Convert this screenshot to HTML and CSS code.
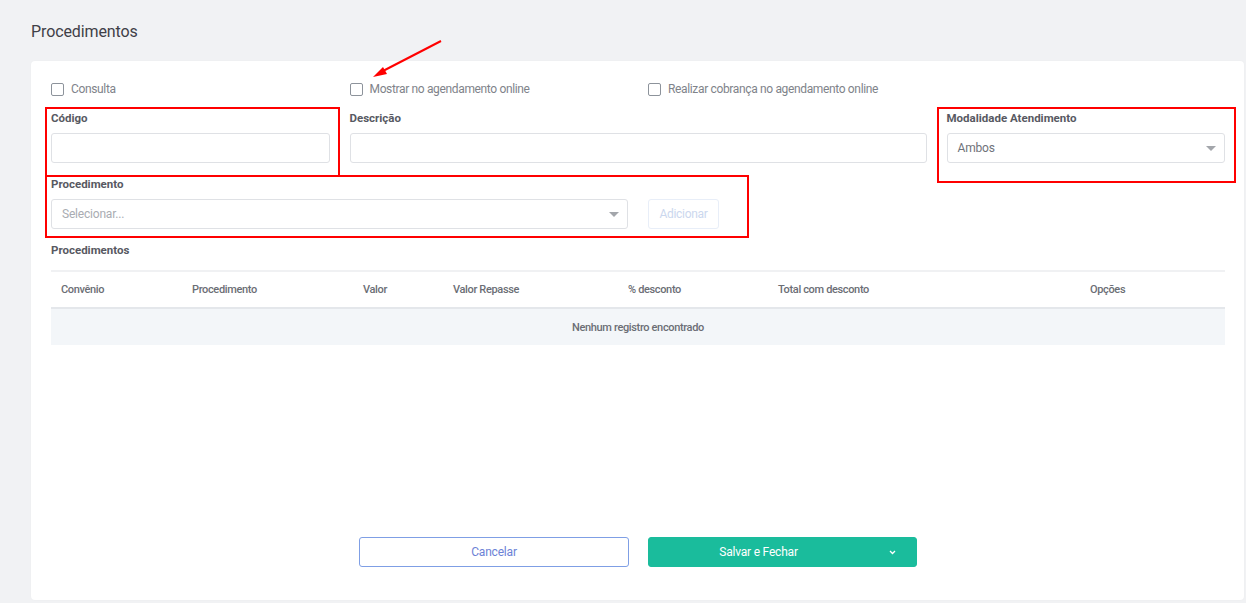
FILE: index.html
```html
<!DOCTYPE html>
<html lang="pt-BR">
<head>
<meta charset="utf-8">
<title>Procedimentos</title>
<link rel="stylesheet" href="styles.css">
</head>
<body>
<div class="page">
  <h1 class="page-title">Procedimentos</h1>
  <div class="card">
    <div class="grid checks">
      <label class="check"><span class="box"></span>Consulta</label>
      <label class="check"><span class="box"></span>Mostrar no agendamento online</label>
      <label class="check"><span class="box"></span>Realizar cobrança no agendamento online</label>
    </div>
    <div class="grid fields">
      <div class="field">
        <div class="label">Código</div>
        <div class="input"></div>
      </div>
      <div class="field span2">
        <div class="label">Descrição</div>
        <div class="input"></div>
      </div>
      <div class="field">
        <div class="label">Modalidade Atendimento</div>
        <div class="input select"><span class="value">Ambos</span><span class="caret"></span></div>
      </div>
    </div>
    <div class="grid fields proc">
      <div class="field span2">
        <div class="label">Procedimento</div>
        <div class="input select"><span class="placeholder">Selecionar...</span><span class="caret"></span></div>
      </div>
      <div class="field add-field">
        <button class="btn-add" disabled>Adicionar</button>
      </div>
    </div>
    <div class="label section-label">Procedimentos</div>
    <table class="table">
      <colgroup>
        <col style="width:131px"><col style="width:171px"><col style="width:90px"><col style="width:175px"><col style="width:150px"><col style="width:312px"><col style="width:145px">
      </colgroup>
      <thead>
        <tr><th>Convênio</th><th>Procedimento</th><th>Valor</th><th>Valor Repasse</th><th>% desconto</th><th>Total com desconto</th><th>Opções</th></tr>
      </thead>
      <tbody>
        <tr class="empty"><td colspan="7">Nenhum registro encontrado</td></tr>
      </tbody>
    </table>
    <div class="actions">
      <button class="btn btn-cancel">Cancelar</button>
      <button class="btn btn-save"><span class="save-main">Salvar e Fechar</span><span class="save-toggle"><svg width="7" height="5" viewBox="0 0 7 5"><path d="M1 1l2.5 2.5L6 1" fill="none" stroke="#fff" stroke-width="1.3"/></svg></span></button>
    </div>
  </div>
</div>
<div class="annotations">
  <div class="mark mark-codigo"></div>
  <div class="mark mark-modal"></div>
  <div class="mark mark-proc"></div>
  <svg class="arrow" width="1246" height="603" viewBox="0 0 1246 603">
    <line x1="441" y1="41" x2="381" y2="72" stroke="#f00" stroke-width="2"/>
    <polygon points="373,77 383,67 387,74" fill="#f00"/>
  </svg>
</div>
</body>
</html>
```

FILE: styles.css
```css
html, body {
  margin: 0;
  padding: 0;
}
body {
  background: #f1f2f4;
  font-family: Roboto, "Liberation Sans", Arial, sans-serif;
  color: #575962;
  width: 1246px;
  height: 603px;
  overflow: hidden;
  position: relative;
}
.page {
  padding: 22px 2px 0 31px;
}
.page-title {
  margin: 0;
  font-size: 16px;
  line-height: 19px;
  font-weight: 400;
  color: #3f4047;
  letter-spacing: -0.1px;
}
.card {
  margin-top: 20px;
  width: 1213px;
  height: 539px;
  box-sizing: border-box;
  background: #fff;
  border-radius: 4px;
  box-shadow: 0 0 2px rgba(0,0,0,0.04);
  padding: 19px 19px 33px 20px;
  display: flex;
  flex-direction: column;
}
.grid {
  display: grid;
  grid-template-columns: repeat(4, 278.5px);
  column-gap: 20px;
}
.checks {
  height: 16px;
  align-items: center;
  margin-top: 1px;
}
.check {
  display: flex;
  align-items: center;
  font-size: 12px;
  color: #80838a;
  line-height: 16px;
  letter-spacing: -0.35px;
}
.box {
  width: 11px;
  height: 11px;
  border: 1.5px solid #8d939b;
  border-radius: 2px;
  margin-right: 7px;
  flex: none;
}
.fields {
  margin-top: 14px;
}
.fields.proc {
  margin-top: 14px;
}
.span2 {
  grid-column: span 2;
}
.label {
  font-size: 11.5px;
  font-weight: 700;
  line-height: 14px;
  color: #575962;
  margin-bottom: 8px;
}
.input {
  height: 30px;
  box-sizing: border-box;
  border: 1px solid #dfe1e5;
  border-radius: 3px;
  background: #fff;
}
.select {
  display: flex;
  align-items: center;
  justify-content: space-between;
  padding: 0 8px 0 10px;
  font-size: 12px;
  letter-spacing: -0.2px;
}
.select .value {
  color: #6f727a;
}
.select .placeholder {
  color: #a9acb2;
}
.caret {
  width: 0;
  height: 0;
  border-left: 5px solid transparent;
  border-right: 5px solid transparent;
  border-top: 5px solid #a3a6ab;
}
.add-field {
  padding-top: 22px;
}
.btn-add {
  width: 71px;
  height: 30px;
  border: 1px solid #e8eef8;
  border-radius: 3px;
  background: #fff;
  color: #cbd7ee;
  font-family: inherit;
  font-size: 12px;
  letter-spacing: -0.3px;
  padding: 0;
}
.section-label {
  margin-top: 14px;
  margin-bottom: 13px;
}
.table {
  width: 1174px;
  border-collapse: collapse;
  table-layout: fixed;
  font-size: 11px;
  letter-spacing: -0.35px;
}
.table th {
  text-align: left;
  font-weight: 500;
  color: #6b6e75;
  padding: 0 10px;
  height: 35px;
  border-top: 2px solid #f0f1f3;
  border-bottom: 2px solid #e4e7eb;
}
.table td {
  height: 36px;
  padding: 0;
  text-align: center;
  font-weight: 500;
  color: #6b6e75;
  background: #f3f6f9;
}
.actions {
  margin-top: auto;
  display: flex;
  justify-content: center;
  gap: 19px;
}
.btn {
  height: 30px;
  box-sizing: border-box;
  border-radius: 3px;
  font-family: inherit;
  font-size: 12px;
  letter-spacing: -0.2px;
  padding: 0;
}
.btn-cancel {
  width: 270px;
  background: #fff;
  border: 1px solid #7f9fe5;
  color: #6c82d6;
}
.btn-save {
  width: 269px;
  background: #1abc9c;
  border: 1px solid #1abc9c;
  color: #fff;
  display: flex;
  align-items: center;
}
.save-main {
  flex: 1;
  text-align: center;
}
.save-toggle {
  width: 48px;
  display: flex;
  justify-content: center;
  align-items: center;
}
.annotations {
  position: absolute;
  inset: 0;
  pointer-events: none;
}
.mark {
  position: absolute;
  border: 2px solid #f00;
  box-sizing: border-box;
}
.mark-codigo {
  left: 45px;
  top: 107px;
  width: 295px;
  height: 70px;
}
.mark-modal {
  left: 937px;
  top: 107px;
  width: 299px;
  height: 76px;
}
.mark-proc {
  left: 45px;
  top: 175px;
  width: 704px;
  height: 63px;
}
.arrow {
  position: absolute;
  left: 0;
  top: 0;
}
```
